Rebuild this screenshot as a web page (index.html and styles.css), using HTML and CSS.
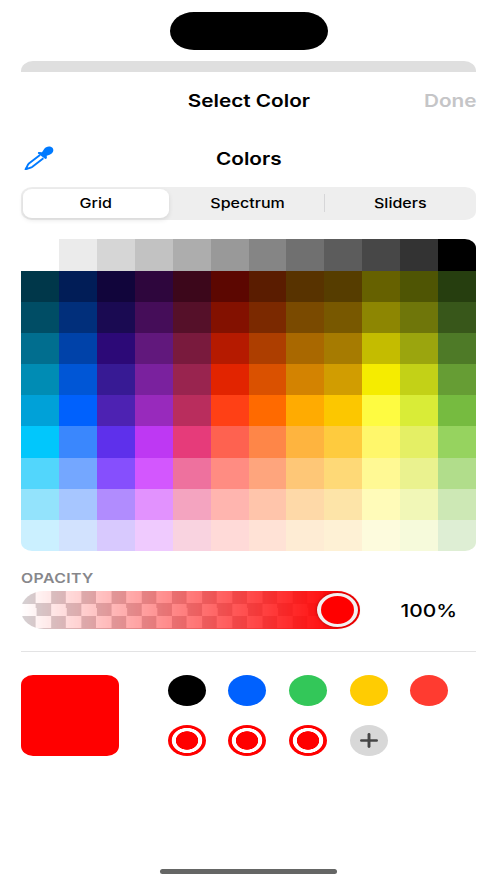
FILE: index.html
```html
<!DOCTYPE html>
<html lang="en">
<head>
<meta charset="utf-8">
<title>Select Color</title>
<link rel="stylesheet" href="styles.css">
</head>
<body>
<div class="island"></div>
<div class="sheet-behind"></div>
<main class="sheet">
  <header class="nav">
    <h1 class="nav-title"><span class="wide">Select Color</span></h1>
    <button class="done"><span class="wide">Done</span></button>
  </header>
  <div class="toolbar">
    <svg class="dropper" viewBox="0 0 30 25">
      <path fill="#007aff" d="M14.200 7.700C13.500 7 14 5.800 15.200 5.900L18 6.300 20 3.200C21.500.800 24.800-.1 27.200 1 29.800 2.200 30 5.200 28 7.200 26.700 8.500 24.800 9 22.700 9.700L22.900 11.700C23 12.700 21.600 13.300 20.700 12.600Z"/>
      <path fill="none" stroke="#007aff" stroke-width="1.900" stroke-linejoin="round" d="M16 9 4.900 17.600C3.600 18.700 3.300 20.200 1.700 23.100 4.800 22.100 6.700 21.900 8.100 20.900L19.400 12.200"/>
      <path fill="#007aff" d="M.7 23.100 2.400 20.400 4.900 22.400 1.600 24Q.3 24.100.7 23.100Z"/>
    </svg>
    <h2 class="title"><span class="wide">Colors</span></h2>
  </div>
  <div class="segments">
    <button class="segment selected"><span class="wide">Grid</span></button>
    <button class="segment middle"><span class="wide">Spectrum</span></button>
    <button class="segment last"><span class="wide">Sliders</span></button>
  </div>
  <div class="palette" id="palette"></div>
  <h3 class="label"><span class="wide">OPACITY</span></h3>
  <div class="opacity">
    <div class="slider"><div class="knob"></div></div>
    <div class="value"><span class="wide">100%</span></div>
  </div>
  <footer class="saved">
    <div class="current"></div>
    <div class="swatches">
      <i class="swatch black"></i>
      <i class="swatch blue"></i>
      <i class="swatch green"></i>
      <i class="swatch yellow"></i>
      <i class="swatch coral"></i>
      <i class="swatch ring"></i>
      <i class="swatch ring"></i>
      <i class="swatch ring"></i>
      <i class="swatch add">
        <svg viewBox="0 0 18 15"><path d="M1.300 7.500H16.700" stroke-width="2.500"/><path d="M9 1.500V13.500" stroke-width="2.900"/></svg>
      </i>
    </div>
  </footer>
</main>
<div class="home"></div>
<script src="palette.js"></script>
</body>
</html>
```
FILE: palette.js
```js
const rows = [
  "FFFFFF EBEBEB D6D6D6 C2C2C2 ADADAD 999999 858585 707070 5C5C5C 474747 333333 000000",
  "00374A 011D57 11053B 2E063D 3C071B 5C0701 5A1C00 583300 563D00 666100 4F5504 263E0F",
  "004D65 012F7B 1A0A52 450D59 551029 831100 7B2900 7A4A00 785800 8D8602 6F760A 38571A",
  "016E8F 0042A9 2C0977 61187C 791A3D B51A00 AD3E00 A96800 A67B01 C4BC00 9BA50E 4E7A27",
  "008CB4 0056D6 371A94 7A219E 99244F E22400 DA5100 D38301 D19D01 F5EC00 C3D117 669D34",
  "00A1D8 0061FD 4D22B2 982ABC B92D5D FF4015 FF6A00 FFAB01 FCC700 FEFB41 D9EC37 76BB40",
  "01C7FC 3A87FD 5E30EB BE38F3 E63B7A FE6250 FE8648 FEB43F FECB3E FFF76B E4EF65 96D35F",
  "52D6FC 74A7FF 864FFD D357FE EE719E FF8C82 FEA57D FEC777 FED977 FFF994 EAF28F B1DD8B",
  "93E3FC A7C6FF B18CFE E292FE F4A4C0 FFB5AF FFC5AB FED9A8 FDE4A8 FFFBB9 F1F7B7 CDE8B5",
  "CBF0FF D2E2FE D8C9FE EFCAFE F9D3E0 FFDAD8 FFE2D6 FEECD4 FEF1D5 FDFBDD F6FADB DEEED4"
];
const palette = document.getElementById("palette");
for (const color of rows.join(" ").split(" ")) {
  const cell = document.createElement("i");
  cell.style.backgroundColor = "#" + color;
  palette.append(cell);
}
```
FILE: styles.css
```css
* { box-sizing: border-box; }
body {
  margin: 0;
  height: 883px;
  padding: 12px 20.6px 0;
  display: flex;
  flex-direction: column;
  overflow: hidden;
  background: #fff;
  color: #000;
  font-family: Inter, "Liberation Sans", sans-serif;
}
h1, h2, h3 { margin: 0; }
button { border: 0; padding: 0; margin: 0; background: none; font: inherit; color: inherit; }
.wide { display: inline-block; white-space: nowrap; transform: scaleX(1.18); }

.island {
  width: 158px;
  height: 38px;
  align-self: center;
  border-radius: 24px / 19px;
  background: #000;
}
.sheet-behind {
  height: 10.5px;
  margin-top: 11.3px;
  flex: none;
  border-radius: 12px 12px 0 0 / 10px 10px 0 0;
  background: #dfdfdf;
}
.sheet { display: flex; flex-direction: column; }

.nav {
  height: 58px;
  display: grid;
  grid-template-columns: 1fr auto 1fr;
  align-items: center;
  font-size: 17.6px;
}
.nav-title { grid-column: 2; font-size: inherit; font-weight: 600; }
.done { justify-self: end; font-weight: 600; color: #c5c5c7; }
.done .wide { transform-origin: right; }

.toolbar {
  height: 57.2px;
  display: grid;
  grid-template-columns: 1fr auto 1fr;
  align-items: center;
}
.dropper { width: 30px; height: 25px; margin-left: 3px; }
.title { font-size: 17.6px; font-weight: 600; }

.segments {
  height: 33px;
  display: grid;
  grid-template-columns: 150.500px 150.500px 1fr;
  padding: 2px 2.5px;
  border-radius: 11px 11px / 9px 9px;
  background: #eee;
  font-size: 13.6px;
}
.segment { display: flex; align-items: center; justify-content: center; font-weight: 450; }
.selected {
  margin-right: 5px;
  border-radius: 9px / 7.5px;
  background: #fff;
  box-shadow: 0 2px 5px rgba(0, 0, 0, .1);
  font-weight: 550;
}
.middle { padding-right: 2px; }
.last {
  padding-left: 2px;
  background: linear-gradient(#d6d6d8, #d6d6d8) 0 center / 1px 18px no-repeat;
}

.palette {
  height: 311.500px;
  margin-top: 19.5px;
  display: grid;
  grid-template: repeat(10, 1fr) / repeat(12, 1fr);
  overflow: hidden;
  border-radius: 11px / 9px;
}

.label {
  height: 14px;
  margin-top: 20px;
  line-height: 14px;
  font-size: 13.4px;
  font-weight: 600;
  letter-spacing: .35px;
  color: #87878b;
}
.label .wide { transform-origin: left; }

.opacity { display: flex; align-items: center; margin-top: 6.300px; }
.slider {
  width: 339.5px;
  height: 37.5px;
  padding-right: 2px;
  display: flex;
  align-items: center;
  justify-content: flex-end;
  border-radius: 23px / 18.75px;
  background:
    linear-gradient(90deg, rgba(255, 0, 0, 0), #f00 96%),
    conic-gradient(#fff 25%, #d5d1d3 0 50%, #fff 0 75%, #d5d1d3 0) 0 0 / 30.2px 25px;
}
.knob {
  width: 41px;
  height: 34px;
  border: solid #f3f1f1;
  border-width: 3.5px 4px;
  border-radius: 50%;
  background: #f00;
  box-shadow: 0 0 3px rgba(80, 0, 0, .55);
}
.value { flex: 1; padding-left: 21px; text-align: center; font-size: 17.6px; font-weight: 500; }
.value .wide { transform: scaleX(1.19); }

.saved {
  margin-top: 22.700px;
  padding-top: 22.300px;
  display: flex;
  border-top: 1px solid #e3e3e4;
}
.current { width: 98.5px; height: 81px; border-radius: 12px / 10px; background: #f00; }
.swatches {
  margin-left: 48.700px;
  display: grid;
  grid-template: repeat(2, 31px) / repeat(5, 38px);
  gap: 19px 22.6px;
}
.swatch { border-radius: 50%; }
.black { background: #000; }
.blue { background: #0061fe; }
.green { background: #33c759; }
.yellow { background: #ffcc02; }
.coral { background: #ff3b30; }
.ring {
  background:
    radial-gradient(11.300px 9.300px, #f00 96%, transparent 102%),
    radial-gradient(15.300px 12.600px, #fff 97%, #f00 102%);
}
.add { display: grid; place-items: center; background: #d8d8d8; }
.add svg { width: 18px; height: 15px; fill: none; stroke: #464646; stroke-linecap: round; }

.home {
  width: 177px;
  height: 5px;
  flex: none;
  align-self: center;
  margin-top: auto;
  margin-bottom: 9px;
  border-radius: 3px;
  background: #656665;
}
```
